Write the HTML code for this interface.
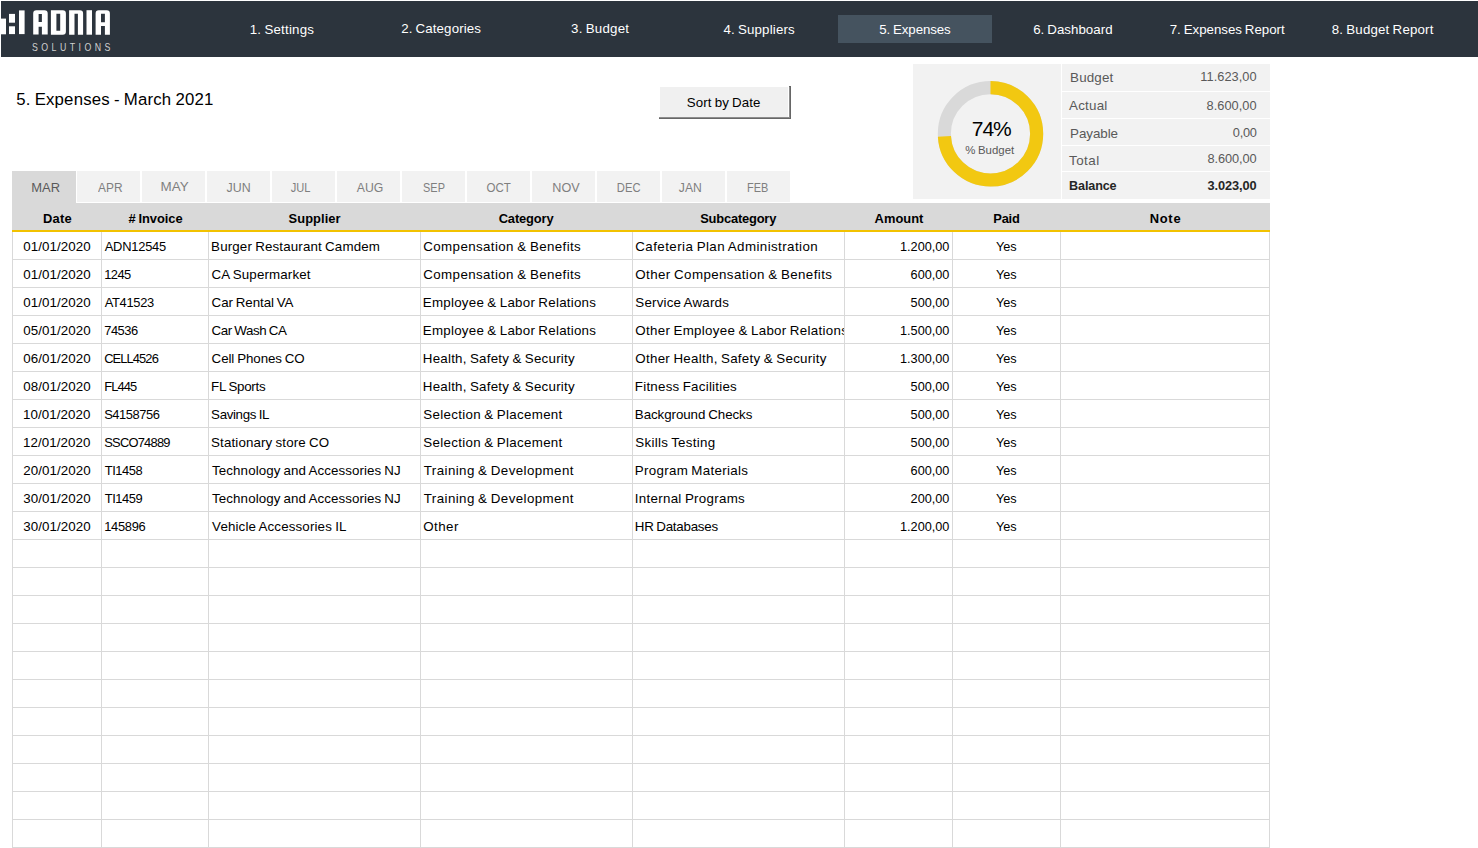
<!DOCTYPE html>
<html><head><meta charset="utf-8"><style>
html,body{margin:0;padding:0;background:#fff;width:1478px;height:848px;overflow:hidden;position:relative}
body div, body svg{position:absolute}
.t{font-family:'Liberation Sans', sans-serif;white-space:nowrap;line-height:normal;word-spacing:-0.7px}
</style></head><body>
<div style="left:1px;top:1px;width:1477px;height:56px;background:#2c343d;"></div>
<div style="left:838px;top:15px;width:154px;height:28px;background:#45535f;"></div>
<div class="t" style="left:-18.05px;width:600px;text-align:center;top:22px;font-size:13.3px;color:#fff;font-weight:normal;letter-spacing:0.210px;"><span id="nav0">1. Settings</span></div>
<div class="t" style="left:141.10px;width:600px;text-align:center;top:21px;font-size:13.3px;color:#fff;font-weight:normal;letter-spacing:0.117px;"><span id="nav1">2. Categories</span></div>
<div class="t" style="left:300.10px;width:600px;text-align:center;top:21px;font-size:13.3px;color:#fff;font-weight:normal;letter-spacing:0.210px;"><span id="nav2">3. Budget</span></div>
<div class="t" style="left:459.15px;width:600px;text-align:center;top:22px;font-size:13.3px;color:#fff;font-weight:normal;letter-spacing:0.165px;"><span id="nav3">4. Suppliers</span></div>
<div class="t" style="left:614.95px;width:600px;text-align:center;top:22px;font-size:13.3px;color:#fff;font-weight:normal;letter-spacing:-0.098px;"><span id="nav4">5. Expenses</span></div>
<div class="t" style="left:772.85px;width:600px;text-align:center;top:22px;font-size:13.3px;color:#fff;font-weight:normal;letter-spacing:0.025px;"><span id="nav5">6. Dashboard</span></div>
<div class="t" style="left:927.15px;width:600px;text-align:center;top:22px;font-size:13.3px;color:#fff;font-weight:normal;letter-spacing:-0.025px;"><span id="nav6">7. Expenses Report</span></div>
<div class="t" style="left:1082.65px;width:600px;text-align:center;top:22px;font-size:13.3px;color:#fff;font-weight:normal;letter-spacing:0.168px;"><span id="nav7">8. Budget Report</span></div>
<svg style="position:absolute;left:0;top:0" width="130" height="57" viewBox="0 0 130 57">
<g fill="#fff">
<rect x="0" y="18.6" width="6" height="15.7"/>
<rect x="9" y="13.9" width="6" height="8.8"/>
<rect x="9" y="26.3" width="6" height="7.8"/>
<rect x="19" y="10.4" width="5.6" height="23.7"/>
<path d="M33.2 34.5V13.4Q33.2 10.2 36.4 10.2H44.5Q47.7 10.2 47.7 13.4V34.5H41.9V26.7H38.6V34.5ZM38.6 14V21.9H41.9V14Z"/>
<path d="M50.9 10.2H62.7Q65.9 10.2 65.9 13.4V31.5Q65.9 34.7 62.7 34.7H50.9ZM56.4 13.8V30.8H60.2V13.8Z"/>
<path d="M69.1 10.2H79.9Q83.1 10.2 83.1 13.4V34.7H77.9V13.8H74.5V34.7H69.1Z"/>
<rect x="86.5" y="10.2" width="5.5" height="24.5"/>
<path d="M95.6 34.7V13.4Q95.6 10.2 98.8 10.2H106.7Q109.9 10.2 109.9 13.4V34.7H104.9V26.1H101V34.7ZM101 13.8V22.2H104.9V13.8Z"/>
</g></svg>
<div class="t" style="left:32.40px;top:41px;font-size:11px;color:#d0d0d0;font-weight:normal;letter-spacing:4.3px;transform:scaleX(0.8);transform-origin:0 0;"><span id="sol">SOLUTIONS</span></div>
<div class="t" style="left:16.20px;top:90px;font-size:16.8px;color:#000;font-weight:normal;letter-spacing:0.177px;"><span id="title">5. Expenses - March 2021</span></div>
<div style="left:659px;top:86px;width:132px;height:33px;background:#666666;"></div>
<div style="left:789px;top:87px;width:1px;height:31px;background:#8c8c8c;"></div>
<div style="left:659px;top:117px;width:130px;height:1px;background:#8c8c8c;"></div>
<div style="left:659px;top:86px;width:130px;height:31px;background:#ffffff;"></div>
<div style="left:660px;top:87px;width:128px;height:30px;background:#f0f0f0;"></div>
<div class="t" style="left:423.65px;width:600px;text-align:center;top:95px;font-size:13.3px;color:#000;font-weight:normal;letter-spacing:0.102px;"><span id="btn">Sort by Date</span></div>
<div style="left:913px;top:64px;width:148px;height:135px;background:#f2f2f2;"></div>
<div style="left:1062px;top:64px;width:208px;height:27px;background:#f2f2f2;"></div>
<div style="left:1062px;top:92px;width:208px;height:26px;background:#f2f2f2;"></div>
<div style="left:1062px;top:119px;width:208px;height:26px;background:#f2f2f2;"></div>
<div style="left:1062px;top:146px;width:208px;height:25px;background:#f2f2f2;"></div>
<div style="left:1062px;top:172px;width:208px;height:27px;background:#f2f2f2;"></div>
<div class="t" style="left:1070.10px;top:70px;font-size:13.4px;color:#595959;font-weight:normal;letter-spacing:0.140px;"><span id="sl0">Budget</span></div>
<div class="t" style="left:256.60px;width:1000px;text-align:right;top:69px;font-size:12.8px;color:#595959;font-weight:normal;letter-spacing:0.035px;"><span id="sv0">11.623,00</span></div>
<div class="t" style="left:1069.00px;top:98px;font-size:13.4px;color:#595959;font-weight:normal;letter-spacing:0.224px;"><span id="sl1">Actual</span></div>
<div class="t" style="left:256.60px;width:1000px;text-align:right;top:98px;font-size:12.8px;color:#595959;font-weight:normal;letter-spacing:0.020px;"><span id="sv1">8.600,00</span></div>
<div class="t" style="left:1070.10px;top:126px;font-size:13.4px;color:#595959;font-weight:normal;letter-spacing:-0.070px;"><span id="sl2">Payable</span></div>
<div class="t" style="left:256.60px;width:1000px;text-align:right;top:125px;font-size:12.8px;color:#595959;font-weight:normal;letter-spacing:-0.280px;"><span id="sv2">0,00</span></div>
<div class="t" style="left:1069.00px;top:153px;font-size:13.4px;color:#595959;font-weight:normal;letter-spacing:0.490px;"><span id="sl3">Total</span></div>
<div class="t" style="left:256.60px;width:1000px;text-align:right;top:151px;font-size:12.8px;color:#595959;font-weight:normal;letter-spacing:-0.100px;"><span id="sv3">8.600,00</span></div>
<div class="t" style="left:1069.10px;top:179px;font-size:12.6px;color:#262626;font-weight:bold;letter-spacing:-0.140px;"><span id="sl4">Balance</span></div>
<div class="t" style="left:256.60px;width:1000px;text-align:right;top:178px;font-size:12.8px;color:#262626;font-weight:bold;letter-spacing:-0.100px;"><span id="sv4">3.023,00</span></div>
<svg style="position:absolute;left:0;top:0" width="1478" height="260" viewBox="0 0 1478 260">
<circle cx="990.5" cy="133.8" r="46.15" fill="none" stroke="#d9d9d9" stroke-width="13.10"/>
<circle cx="990.5" cy="133.8" r="46.15" fill="none" stroke="#f2c811" stroke-width="13.10" stroke-dasharray="214.58 289.97" transform="rotate(-90 990.5 133.8)"/>
</svg>
<div class="t" style="left:691.30px;width:600px;text-align:center;top:117px;font-size:21px;color:#000;font-weight:normal;letter-spacing:-1.050px;"><span id="pct">74%</span></div>
<div class="t" style="left:689.80px;width:600px;text-align:center;top:144px;font-size:11.4px;color:#595959;font-weight:normal;letter-spacing:0.020px;"><span id="pctl">% Budget</span></div>
<div style="left:12px;top:171px;width:64px;height:32px;background:#d9d9d9;"></div>
<div style="left:77px;top:171px;width:63px;height:31px;background:#f2f2f2;"></div>
<div style="left:142px;top:171px;width:63px;height:31px;background:#f2f2f2;"></div>
<div style="left:207px;top:171px;width:63px;height:31px;background:#f2f2f2;"></div>
<div style="left:272px;top:171px;width:63px;height:31px;background:#f2f2f2;"></div>
<div style="left:337px;top:171px;width:63px;height:31px;background:#f2f2f2;"></div>
<div style="left:402px;top:171px;width:63px;height:31px;background:#f2f2f2;"></div>
<div style="left:467px;top:171px;width:63px;height:31px;background:#f2f2f2;"></div>
<div style="left:532px;top:171px;width:63px;height:31px;background:#f2f2f2;"></div>
<div style="left:597px;top:171px;width:63px;height:31px;background:#f2f2f2;"></div>
<div style="left:662px;top:171px;width:63px;height:31px;background:#f2f2f2;"></div>
<div style="left:727px;top:171px;width:63px;height:31px;background:#f2f2f2;"></div>
<div class="t" style="left:-253.95px;width:600px;text-align:center;top:181px;font-size:12.3px;color:#595959;font-weight:normal;"><span id="tab0" style="display:inline-block;transform:scaleX(1.0526);">MAR</span></div>
<div class="t" style="left:-190.05px;width:600px;text-align:center;top:181px;font-size:12.0px;color:#7f7f7f;font-weight:normal;"><span id="tab1" style="display:inline-block;transform:scaleX(0.9917);">APR</span></div>
<div class="t" style="left:-125.80px;width:600px;text-align:center;top:180px;font-size:12.0px;color:#7f7f7f;font-weight:normal;"><span id="tab2" style="display:inline-block;transform:scaleX(1.1181);">MAY</span></div>
<div class="t" style="left:-61.15px;width:600px;text-align:center;top:181px;font-size:12.0px;color:#7f7f7f;font-weight:normal;"><span id="tab3" style="display:inline-block;transform:scaleX(1.0326);">JUN</span></div>
<div class="t" style="left:0.95px;width:600px;text-align:center;top:181px;font-size:12.0px;color:#7f7f7f;font-weight:normal;"><span id="tab4" style="display:inline-block;transform:scaleX(0.9254);">JUL</span></div>
<div class="t" style="left:69.60px;width:600px;text-align:center;top:181px;font-size:12.0px;color:#7f7f7f;font-weight:normal;"><span id="tab5" style="display:inline-block;transform:scaleX(1.0215);">AUG</span></div>
<div class="t" style="left:133.85px;width:600px;text-align:center;top:181px;font-size:12.0px;color:#7f7f7f;font-weight:normal;"><span id="tab6" style="display:inline-block;transform:scaleX(0.9078);">SEP</span></div>
<div class="t" style="left:198.20px;width:600px;text-align:center;top:181px;font-size:12.0px;color:#7f7f7f;font-weight:normal;"><span id="tab7" style="display:inline-block;transform:scaleX(0.9603);">OCT</span></div>
<div class="t" style="left:266.20px;width:600px;text-align:center;top:181px;font-size:12.0px;color:#7f7f7f;font-weight:normal;"><span id="tab8" style="display:inline-block;transform:scaleX(1.0520);">NOV</span></div>
<div class="t" style="left:328.25px;width:600px;text-align:center;top:181px;font-size:12.0px;color:#7f7f7f;font-weight:normal;"><span id="tab9" style="display:inline-block;transform:scaleX(0.9342);">DEC</span></div>
<div class="t" style="left:390.75px;width:600px;text-align:center;top:181px;font-size:12.0px;color:#7f7f7f;font-weight:normal;"><span id="tab10" style="display:inline-block;transform:scaleX(1.0127);">JAN</span></div>
<div class="t" style="left:457.45px;width:600px;text-align:center;top:181px;font-size:12.0px;color:#7f7f7f;font-weight:normal;"><span id="tab11" style="display:inline-block;transform:scaleX(0.9096);">FEB</span></div>
<div style="left:12px;top:203px;width:1258px;height:27px;background:#d9d9d9;"></div>
<div style="left:12px;top:230px;width:1258px;height:2px;background:#f2c200;"></div>
<div class="t" style="left:-242.55px;width:600px;text-align:center;top:211px;font-size:12.9px;color:#000;font-weight:bold;letter-spacing:0.233px;"><span id="h0">Date</span></div>
<div class="t" style="left:-144.50px;width:600px;text-align:center;top:211px;font-size:12.9px;color:#000;font-weight:bold;letter-spacing:-0.035px;"><span id="h1"># Invoice</span></div>
<div class="t" style="left:14.60px;width:600px;text-align:center;top:211px;font-size:12.9px;color:#000;font-weight:bold;letter-spacing:0.060px;"><span id="h2">Supplier</span></div>
<div class="t" style="left:226.10px;width:600px;text-align:center;top:211px;font-size:12.9px;color:#000;font-weight:bold;letter-spacing:-0.140px;"><span id="h3">Category</span></div>
<div class="t" style="left:438.20px;width:600px;text-align:center;top:211px;font-size:12.9px;color:#000;font-weight:bold;letter-spacing:-0.196px;"><span id="h4">Subcategory</span></div>
<div class="t" style="left:599.00px;width:600px;text-align:center;top:211px;font-size:12.9px;color:#000;font-weight:bold;letter-spacing:0.028px;"><span id="h5">Amount</span></div>
<div class="t" style="left:706.45px;width:600px;text-align:center;top:211px;font-size:12.9px;color:#000;font-weight:bold;letter-spacing:-0.233px;"><span id="h6">Paid</span></div>
<div class="t" style="left:865.50px;width:600px;text-align:center;top:211px;font-size:12.9px;color:#000;font-weight:bold;letter-spacing:0.747px;"><span id="h7">Note</span></div>
<div style="left:12px;top:232px;width:1px;height:616px;background:#d9d9d9;"></div>
<div style="left:101px;top:232px;width:1px;height:616px;background:#d9d9d9;"></div>
<div style="left:208px;top:232px;width:1px;height:616px;background:#d9d9d9;"></div>
<div style="left:420px;top:232px;width:1px;height:616px;background:#d9d9d9;"></div>
<div style="left:632px;top:232px;width:1px;height:616px;background:#d9d9d9;"></div>
<div style="left:844px;top:232px;width:1px;height:616px;background:#d9d9d9;"></div>
<div style="left:952px;top:232px;width:1px;height:616px;background:#d9d9d9;"></div>
<div style="left:1060px;top:232px;width:1px;height:616px;background:#d9d9d9;"></div>
<div style="left:1269px;top:232px;width:1px;height:616px;background:#d9d9d9;"></div>
<div style="left:12px;top:259px;width:1258px;height:1px;background:#d9d9d9;"></div>
<div style="left:12px;top:287px;width:1258px;height:1px;background:#d9d9d9;"></div>
<div style="left:12px;top:315px;width:1258px;height:1px;background:#d9d9d9;"></div>
<div style="left:12px;top:343px;width:1258px;height:1px;background:#d9d9d9;"></div>
<div style="left:12px;top:371px;width:1258px;height:1px;background:#d9d9d9;"></div>
<div style="left:12px;top:399px;width:1258px;height:1px;background:#d9d9d9;"></div>
<div style="left:12px;top:427px;width:1258px;height:1px;background:#d9d9d9;"></div>
<div style="left:12px;top:455px;width:1258px;height:1px;background:#d9d9d9;"></div>
<div style="left:12px;top:483px;width:1258px;height:1px;background:#d9d9d9;"></div>
<div style="left:12px;top:511px;width:1258px;height:1px;background:#d9d9d9;"></div>
<div style="left:12px;top:539px;width:1258px;height:1px;background:#d9d9d9;"></div>
<div style="left:12px;top:567px;width:1258px;height:1px;background:#d9d9d9;"></div>
<div style="left:12px;top:595px;width:1258px;height:1px;background:#d9d9d9;"></div>
<div style="left:12px;top:623px;width:1258px;height:1px;background:#d9d9d9;"></div>
<div style="left:12px;top:651px;width:1258px;height:1px;background:#d9d9d9;"></div>
<div style="left:12px;top:679px;width:1258px;height:1px;background:#d9d9d9;"></div>
<div style="left:12px;top:707px;width:1258px;height:1px;background:#d9d9d9;"></div>
<div style="left:12px;top:735px;width:1258px;height:1px;background:#d9d9d9;"></div>
<div style="left:12px;top:763px;width:1258px;height:1px;background:#d9d9d9;"></div>
<div style="left:12px;top:791px;width:1258px;height:1px;background:#d9d9d9;"></div>
<div style="left:12px;top:819px;width:1258px;height:1px;background:#d9d9d9;"></div>
<div style="left:12px;top:847px;width:1258px;height:1px;background:#d9d9d9;"></div>
<div class="t" style="left:-243.00px;width:600px;text-align:center;top:239px;font-size:13.35px;color:#000;font-weight:normal;letter-spacing:0.062px;"><span id="d0">01/01/2020</span></div>
<div class="t" style="left:104.70px;top:239px;font-size:12.9px;color:#000;font-weight:normal;letter-spacing:-0.220px;"><span id="i0">ADN12545</span></div>
<div class="t" style="left:211.10px;top:239px;font-size:13.35px;color:#000;font-weight:normal;letter-spacing:0.146px;"><span id="s0">Burger Restaurant Camdem</span></div>
<div class="t" style="left:423.30px;top:239px;font-size:13.35px;color:#000;font-weight:normal;letter-spacing:0.375px;"><span id="c0">Compensation &amp; Benefits</span></div>
<div class="t" style="left:-50.60px;width:1000px;text-align:right;top:240px;font-size:12.7px;color:#000;font-weight:normal;"><span id="a0">1.200,00</span></div>
<div class="t" style="left:706.20px;width:600px;text-align:center;top:240px;font-size:12.7px;color:#000;font-weight:normal;letter-spacing:-0.070px;"><span id="p0">Yes</span></div>
<div class="t" style="left:-243.00px;width:600px;text-align:center;top:267px;font-size:13.35px;color:#000;font-weight:normal;letter-spacing:0.062px;"><span id="d1">01/01/2020</span></div>
<div class="t" style="left:104.20px;top:267px;font-size:12.9px;color:#000;font-weight:normal;letter-spacing:-0.560px;"><span id="i1">1245</span></div>
<div class="t" style="left:211.60px;top:267px;font-size:13.35px;color:#000;font-weight:normal;letter-spacing:0.129px;"><span id="s1">CA Supermarket</span></div>
<div class="t" style="left:423.30px;top:267px;font-size:13.35px;color:#000;font-weight:normal;letter-spacing:0.375px;"><span id="c1">Compensation &amp; Benefits</span></div>
<div class="t" style="left:-50.60px;width:1000px;text-align:right;top:268px;font-size:12.7px;color:#000;font-weight:normal;"><span id="a1">600,00</span></div>
<div class="t" style="left:706.20px;width:600px;text-align:center;top:268px;font-size:12.7px;color:#000;font-weight:normal;letter-spacing:-0.070px;"><span id="p1">Yes</span></div>
<div class="t" style="left:-243.00px;width:600px;text-align:center;top:295px;font-size:13.35px;color:#000;font-weight:normal;letter-spacing:0.062px;"><span id="d2">01/01/2020</span></div>
<div class="t" style="left:104.70px;top:295px;font-size:12.9px;color:#000;font-weight:normal;letter-spacing:-0.303px;"><span id="i2">AT41523</span></div>
<div class="t" style="left:211.60px;top:295px;font-size:13.35px;color:#000;font-weight:normal;letter-spacing:-0.082px;"><span id="s2">Car Rental VA</span></div>
<div class="t" style="left:422.80px;top:295px;font-size:13.35px;color:#000;font-weight:normal;letter-spacing:0.246px;"><span id="c2">Employee &amp; Labor Relations</span></div>
<div class="t" style="left:-50.60px;width:1000px;text-align:right;top:296px;font-size:12.7px;color:#000;font-weight:normal;"><span id="a2">500,00</span></div>
<div class="t" style="left:706.20px;width:600px;text-align:center;top:296px;font-size:12.7px;color:#000;font-weight:normal;letter-spacing:-0.070px;"><span id="p2">Yes</span></div>
<div class="t" style="left:-243.00px;width:600px;text-align:center;top:323px;font-size:13.35px;color:#000;font-weight:normal;letter-spacing:0.062px;"><span id="d3">05/01/2020</span></div>
<div class="t" style="left:104.20px;top:323px;font-size:12.9px;color:#000;font-weight:normal;letter-spacing:-0.455px;"><span id="i3">74536</span></div>
<div class="t" style="left:211.60px;top:323px;font-size:13.35px;color:#000;font-weight:normal;letter-spacing:-0.434px;"><span id="s3">Car Wash CA</span></div>
<div class="t" style="left:422.80px;top:323px;font-size:13.35px;color:#000;font-weight:normal;letter-spacing:0.246px;"><span id="c3">Employee &amp; Labor Relations</span></div>
<div class="t" style="left:-50.60px;width:1000px;text-align:right;top:324px;font-size:12.7px;color:#000;font-weight:normal;"><span id="a3">1.500,00</span></div>
<div class="t" style="left:706.20px;width:600px;text-align:center;top:324px;font-size:12.7px;color:#000;font-weight:normal;letter-spacing:-0.070px;"><span id="p3">Yes</span></div>
<div class="t" style="left:-243.00px;width:600px;text-align:center;top:351px;font-size:13.35px;color:#000;font-weight:normal;letter-spacing:0.062px;"><span id="d4">06/01/2020</span></div>
<div class="t" style="left:104.20px;top:351px;font-size:12.9px;color:#000;font-weight:normal;letter-spacing:-0.900px;"><span id="i4">CELL4526</span></div>
<div class="t" style="left:211.60px;top:351px;font-size:13.35px;color:#000;font-weight:normal;letter-spacing:-0.086px;"><span id="s4">Cell Phones CO</span></div>
<div class="t" style="left:422.80px;top:351px;font-size:13.35px;color:#000;font-weight:normal;letter-spacing:0.233px;"><span id="c4">Health, Safety &amp; Security</span></div>
<div class="t" style="left:-50.60px;width:1000px;text-align:right;top:352px;font-size:12.7px;color:#000;font-weight:normal;"><span id="a4">1.300,00</span></div>
<div class="t" style="left:706.20px;width:600px;text-align:center;top:352px;font-size:12.7px;color:#000;font-weight:normal;letter-spacing:-0.070px;"><span id="p4">Yes</span></div>
<div class="t" style="left:-243.00px;width:600px;text-align:center;top:379px;font-size:13.35px;color:#000;font-weight:normal;letter-spacing:0.062px;"><span id="d5">08/01/2020</span></div>
<div class="t" style="left:104.20px;top:379px;font-size:12.9px;color:#000;font-weight:normal;letter-spacing:-0.875px;"><span id="i5">FL445</span></div>
<div class="t" style="left:211.10px;top:379px;font-size:13.35px;color:#000;font-weight:normal;letter-spacing:-0.263px;"><span id="s5">FL Sports</span></div>
<div class="t" style="left:422.80px;top:379px;font-size:13.35px;color:#000;font-weight:normal;letter-spacing:0.233px;"><span id="c5">Health, Safety &amp; Security</span></div>
<div class="t" style="left:-50.60px;width:1000px;text-align:right;top:380px;font-size:12.7px;color:#000;font-weight:normal;"><span id="a5">500,00</span></div>
<div class="t" style="left:706.20px;width:600px;text-align:center;top:380px;font-size:12.7px;color:#000;font-weight:normal;letter-spacing:-0.070px;"><span id="p5">Yes</span></div>
<div class="t" style="left:-243.25px;width:600px;text-align:center;top:407px;font-size:13.35px;color:#000;font-weight:normal;letter-spacing:0.062px;"><span id="d6">10/01/2020</span></div>
<div class="t" style="left:104.20px;top:407px;font-size:12.9px;color:#000;font-weight:normal;letter-spacing:-0.440px;"><span id="i6">S4158756</span></div>
<div class="t" style="left:211.10px;top:407px;font-size:13.35px;color:#000;font-weight:normal;letter-spacing:-0.358px;"><span id="s6">Savings IL</span></div>
<div class="t" style="left:423.30px;top:407px;font-size:13.35px;color:#000;font-weight:normal;letter-spacing:0.308px;"><span id="c6">Selection &amp; Placement</span></div>
<div class="t" style="left:-50.60px;width:1000px;text-align:right;top:408px;font-size:12.7px;color:#000;font-weight:normal;"><span id="a6">500,00</span></div>
<div class="t" style="left:706.20px;width:600px;text-align:center;top:408px;font-size:12.7px;color:#000;font-weight:normal;letter-spacing:-0.070px;"><span id="p6">Yes</span></div>
<div class="t" style="left:-243.25px;width:600px;text-align:center;top:435px;font-size:13.35px;color:#000;font-weight:normal;letter-spacing:0.062px;"><span id="d7">12/01/2020</span></div>
<div class="t" style="left:104.20px;top:435px;font-size:12.9px;color:#000;font-weight:normal;letter-spacing:-0.753px;"><span id="i7">SSCO74889</span></div>
<div class="t" style="left:211.10px;top:435px;font-size:13.35px;color:#000;font-weight:normal;letter-spacing:0.124px;"><span id="s7">Stationary store CO</span></div>
<div class="t" style="left:423.30px;top:435px;font-size:13.35px;color:#000;font-weight:normal;letter-spacing:0.308px;"><span id="c7">Selection &amp; Placement</span></div>
<div class="t" style="left:-50.60px;width:1000px;text-align:right;top:436px;font-size:12.7px;color:#000;font-weight:normal;"><span id="a7">500,00</span></div>
<div class="t" style="left:706.20px;width:600px;text-align:center;top:436px;font-size:12.7px;color:#000;font-weight:normal;letter-spacing:-0.070px;"><span id="p7">Yes</span></div>
<div class="t" style="left:-243.00px;width:600px;text-align:center;top:463px;font-size:13.35px;color:#000;font-weight:normal;letter-spacing:0.062px;"><span id="d8">20/01/2020</span></div>
<div class="t" style="left:104.70px;top:463px;font-size:12.9px;color:#000;font-weight:normal;letter-spacing:-0.420px;"><span id="i8">TI1458</span></div>
<div class="t" style="left:212.10px;top:463px;font-size:13.35px;color:#000;font-weight:normal;letter-spacing:0.085px;"><span id="s8">Technology and Accessories NJ</span></div>
<div class="t" style="left:423.80px;top:463px;font-size:13.35px;color:#000;font-weight:normal;letter-spacing:0.400px;"><span id="c8">Training &amp; Development</span></div>
<div class="t" style="left:-50.60px;width:1000px;text-align:right;top:464px;font-size:12.7px;color:#000;font-weight:normal;"><span id="a8">600,00</span></div>
<div class="t" style="left:706.20px;width:600px;text-align:center;top:464px;font-size:12.7px;color:#000;font-weight:normal;letter-spacing:-0.070px;"><span id="p8">Yes</span></div>
<div class="t" style="left:-243.00px;width:600px;text-align:center;top:491px;font-size:13.35px;color:#000;font-weight:normal;letter-spacing:0.062px;"><span id="d9">30/01/2020</span></div>
<div class="t" style="left:104.70px;top:491px;font-size:12.9px;color:#000;font-weight:normal;letter-spacing:-0.420px;"><span id="i9">TI1459</span></div>
<div class="t" style="left:212.10px;top:491px;font-size:13.35px;color:#000;font-weight:normal;letter-spacing:0.085px;"><span id="s9">Technology and Accessories NJ</span></div>
<div class="t" style="left:423.80px;top:491px;font-size:13.35px;color:#000;font-weight:normal;letter-spacing:0.400px;"><span id="c9">Training &amp; Development</span></div>
<div class="t" style="left:-50.60px;width:1000px;text-align:right;top:492px;font-size:12.7px;color:#000;font-weight:normal;"><span id="a9">200,00</span></div>
<div class="t" style="left:706.20px;width:600px;text-align:center;top:492px;font-size:12.7px;color:#000;font-weight:normal;letter-spacing:-0.070px;"><span id="p9">Yes</span></div>
<div class="t" style="left:-243.00px;width:600px;text-align:center;top:519px;font-size:13.35px;color:#000;font-weight:normal;letter-spacing:0.062px;"><span id="d10">30/01/2020</span></div>
<div class="t" style="left:104.20px;top:519px;font-size:12.9px;color:#000;font-weight:normal;letter-spacing:-0.308px;"><span id="i10">145896</span></div>
<div class="t" style="left:212.10px;top:519px;font-size:13.35px;color:#000;font-weight:normal;letter-spacing:0.140px;"><span id="s10">Vehicle Accessories IL</span></div>
<div class="t" style="left:423.30px;top:519px;font-size:13.35px;color:#000;font-weight:normal;letter-spacing:0.420px;"><span id="c10">Other</span></div>
<div class="t" style="left:-50.60px;width:1000px;text-align:right;top:520px;font-size:12.7px;color:#000;font-weight:normal;"><span id="a10">1.200,00</span></div>
<div class="t" style="left:706.20px;width:600px;text-align:center;top:520px;font-size:12.7px;color:#000;font-weight:normal;letter-spacing:-0.070px;"><span id="p10">Yes</span></div>
<div style="left:633px;top:232px;width:211px;height:616px;overflow:hidden"><div class="t" style="left:2.30px;top:7px;font-size:13.35px;color:#000;font-weight:normal;letter-spacing:0.420px;"><span id="u0">Cafeteria Plan Administration</span></div>
<div class="t" style="left:2.30px;top:35px;font-size:13.35px;color:#000;font-weight:normal;letter-spacing:0.395px;"><span id="u1">Other Compensation &amp; Benefits</span></div>
<div class="t" style="left:2.30px;top:63px;font-size:13.35px;color:#000;font-weight:normal;letter-spacing:0.194px;"><span id="u2">Service Awards</span></div>
<div class="t" style="left:2.30px;top:91px;font-size:13.35px;color:#000;font-weight:normal;letter-spacing:0.295px;"><span id="u3">Other Employee &amp; Labor Relations</span></div>
<div class="t" style="left:2.30px;top:119px;font-size:13.35px;color:#000;font-weight:normal;letter-spacing:0.285px;"><span id="u4">Other Health, Safety &amp; Security</span></div>
<div class="t" style="left:1.80px;top:147px;font-size:13.35px;color:#000;font-weight:normal;letter-spacing:0.239px;"><span id="u5">Fitness Facilities</span></div>
<div class="t" style="left:1.80px;top:175px;font-size:13.35px;color:#000;font-weight:normal;letter-spacing:-0.070px;"><span id="u6">Background Checks</span></div>
<div class="t" style="left:2.30px;top:203px;font-size:13.35px;color:#000;font-weight:normal;letter-spacing:0.280px;"><span id="u7">Skills Testing</span></div>
<div class="t" style="left:1.80px;top:231px;font-size:13.35px;color:#000;font-weight:normal;letter-spacing:0.297px;"><span id="u8">Program Materials</span></div>
<div class="t" style="left:1.80px;top:259px;font-size:13.35px;color:#000;font-weight:normal;letter-spacing:0.289px;"><span id="u9">Internal Programs</span></div>
<div class="t" style="left:1.80px;top:287px;font-size:13.35px;color:#000;font-weight:normal;letter-spacing:-0.255px;"><span id="u10">HR Databases</span></div></div>
</body></html>
